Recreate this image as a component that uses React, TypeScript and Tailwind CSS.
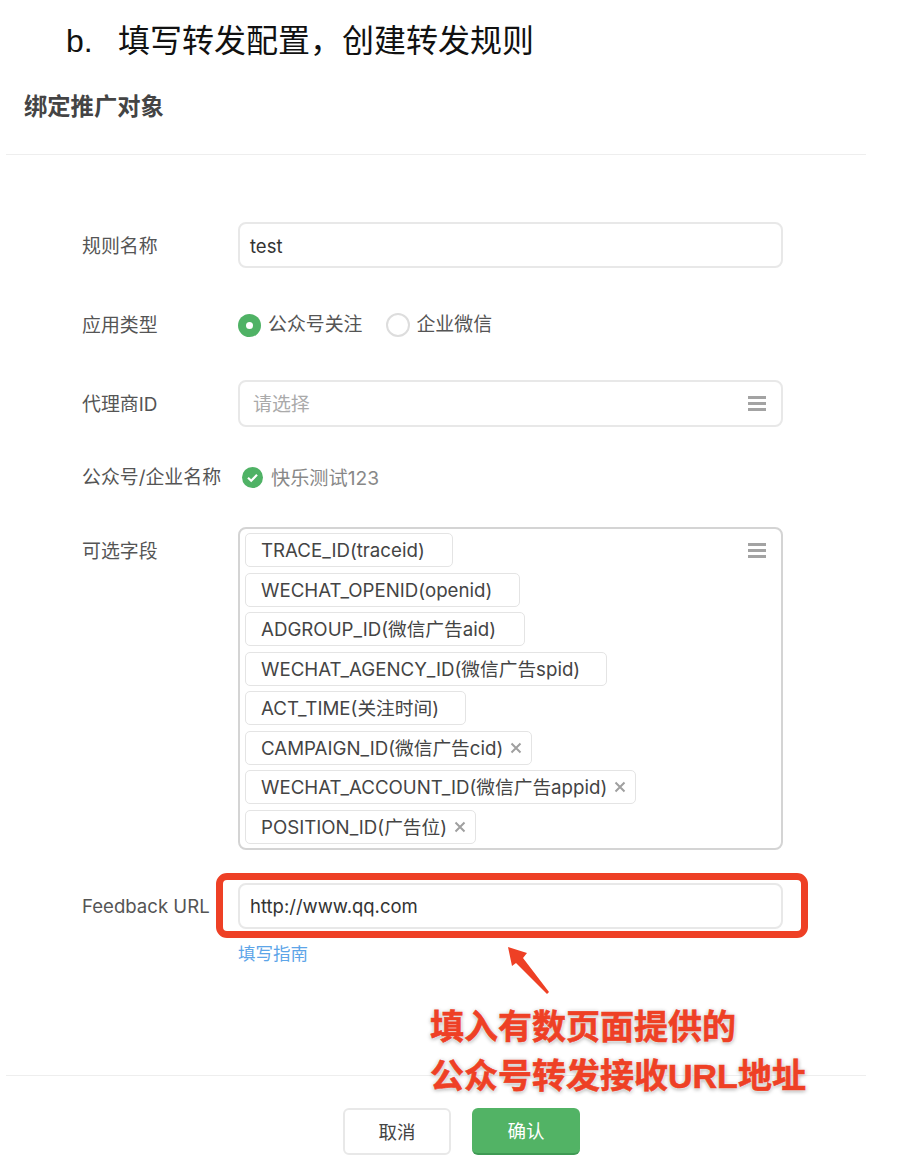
const FONT = "font-['Inter','Noto_Sans_CJK_SC',sans-serif]";

function Menu() {
  return (
    <div className="flex flex-col gap-[3px] w-[18px]">
      <span className="h-[3px] bg-[#a3a3a3]" />
      <span className="h-[3px] bg-[#a3a3a3]" />
      <span className="h-[3px] bg-[#a3a3a3]" />
    </div>
  );
}

function Row({ label, className, labelClass = "pt-[2px]", children }: { label: React.ReactNode; className: string; labelClass?: string; children: React.ReactNode }) {
  return (
    <div className={"flex pl-[76px] " + className}>
      <div className={"w-[156px] shrink-0 text-[18.9px] text-[#555] whitespace-nowrap " + labelClass}>{label}</div>
      <div className="w-[545px]">{children}</div>
    </div>
  );
}

const tags: [string, number, boolean][] = [
  ["TRACE_ID(traceid)", 208, false],
  ["WECHAT_OPENID(openid)", 275, false],
  ["ADGROUP_ID(微信广告aid)", 280, false],
  ["WECHAT_AGENCY_ID(微信广告spid)", 362, false],
  ["ACT_TIME(关注时间)", 221, false],
  ["CAMPAIGN_ID(微信广告cid)", 287, true],
  ["WECHAT_ACCOUNT_ID(微信广告appid)", 391, true],
  ["POSITION_ID(广告位)", 231, true],
];

export default function App() {
  return (
    <div className={"relative w-[920px] h-[1176px] bg-white overflow-hidden " + FONT}>
      <div className="pt-[21px] pl-[66px] h-[78px] text-[32px] leading-[40px] text-[#111] font-['Liberation_Sans','Noto_Sans_CJK_SC',sans-serif] whitespace-nowrap">
        <span className="inline-block w-[52px]">b.</span>填写转发配置，创建转发规则
      </div>

      <div className="ml-[6px] w-[860px]">
        <div className="h-[77px] border-b border-[#eeeeee] pl-[18px] pt-[14px] text-[23.3px] leading-[30px] font-bold text-[#444]">
          绑定推广对象
        </div>

        <Row label="规则名称" labelClass="pt-[4px]" className="pt-[67px] items-center">
          <div className="h-[46px] border-2 border-[#e8e8e8] rounded-[8px] pl-[10px] pt-[3px] flex items-center text-[18.5px] text-[#333]">test</div>
        </Row>

        <Row label="应用类型" className="mt-[45px] items-center h-[24px]">
          <div className="flex items-center text-[18.9px] text-[#555]">
            <span className="w-[23px] h-[23px] rounded-full bg-[#4fb265] flex items-center justify-center mr-[7px]">
              <span className="w-[7px] h-[7px] rounded-full bg-white" />
            </span>
            <span className="pt-[1px]">公众号关注</span>
            <span className="w-[24px] h-[24px] rounded-full border-2 border-[#dddddd] bg-white ml-[24px] mr-[6px]" />
            <span className="pt-[1px]">企业微信</span>
          </div>
        </Row>

        <Row label="代理商ID" labelClass="pt-[4px]" className="mt-[43px] items-center">
          <div className="h-[47px] border-2 border-[#e8e8e8] rounded-[8px] pl-[13px] pr-[15px] flex items-center justify-between text-[18.9px] text-[#aaa]">
            <span className="pt-[3px]">请选择</span>
            <Menu />
          </div>
        </Row>

        <Row label="公众号/企业名称" className="mt-[38px] items-center h-[24px]">
          <div className="flex items-center text-[19.2px] text-[#888] pl-[4px]">
            <svg width="21" height="21" viewBox="0 0 21 21" className="mr-[8px]">
              <circle cx="10.5" cy="10.5" r="10.5" fill="#4fb265" />
              <path d="M6 10.8l3.2 3L15 7.8" fill="none" stroke="#fff" strokeWidth="2.2" />
            </svg>
            <span className="pt-[2px]">快乐测试123</span>
          </div>
        </Row>

        <Row label="可选字段" className="mt-[38px] items-start" labelClass="pt-[11px]">
          <div className="relative h-[323px] border-2 border-[#d4d4d4] rounded-[8px] pt-[4px] pl-[5px] flex flex-col gap-[5.5px]">
            {tags.map(([t, w, x]) => (
              <div
                key={t}
                style={{ width: w }}
                className="h-[34px] shrink-0 border border-[#e4e4e4] rounded-[5px] pl-[15px] pt-[3px] flex items-center text-[18.7px] text-[#444] whitespace-nowrap"
              >
                <span>{t}</span>
                {x && (
                  <svg width="12" height="12" viewBox="0 0 12 12" className="ml-[7px] -mt-[3px]">
                    <path d="M1.5 1.5l9 9M10.5 1.5l-9 9" stroke="#a0a0a0" strokeWidth="2" />
                  </svg>
                )}
              </div>
            ))}
            <div className="absolute right-[15px] top-[14px]"><Menu /></div>
          </div>
        </Row>

        <Row label={<span className="text-[18.6px]">Feedback URL</span>} className="mt-[33px] items-center">
          <div className="h-[46px] border-2 border-[#e8e8e8] rounded-[8px] pl-[10px] pt-[1px] flex items-center text-[18.5px] text-[#333]">http://www.qq.com</div>
        </Row>

        <div className="pl-[232px] mt-[13px] text-[17.5px] leading-[24px] text-[#5da5e8]">填写指南</div>

        <div className="mt-[109px] border-t border-[#eeeeee] pt-[32px] pl-[337px] flex gap-[21px]">
          <button className="w-[108px] h-[47px] border-2 border-[#e8e8e8] rounded-[6px] bg-white pt-[2px] text-[18.5px] text-[#444]">取消</button>
          <button className="w-[108px] h-[47px] border-b-2 border-[#3f9a54] rounded-[6px] bg-[#52b365] pt-[2px] text-[18.5px] text-white">确认</button>
        </div>
      </div>

      <div className="absolute left-[216px] top-[873px] w-[592px] h-[65px] border-[7px] border-[#ee4025] rounded-[11px]" />

      <svg className="absolute left-[500px] top-[940px]" width="60" height="60" viewBox="0 0 60 60">
        <path d="M8 7L27 13L23 18L49 52L47 54L16 23L12 26Z" fill="#ee4025" />
      </svg>

      <div className="absolute left-[430px] top-[1003px] text-[34px] leading-[49px] font-bold text-[#ee4025] whitespace-nowrap [-webkit-text-stroke:0.6px_#ee4025] [text-shadow:0_0_2px_#fff,0_0_3px_#fff,0_1px_4px_#888] font-['Liberation_Sans','Noto_Sans_CJK_SC',sans-serif]">
        <div>填入有数页面提供的</div>
        <div>公众号转发接收URL地址</div>
      </div>
    </div>
  );
}
